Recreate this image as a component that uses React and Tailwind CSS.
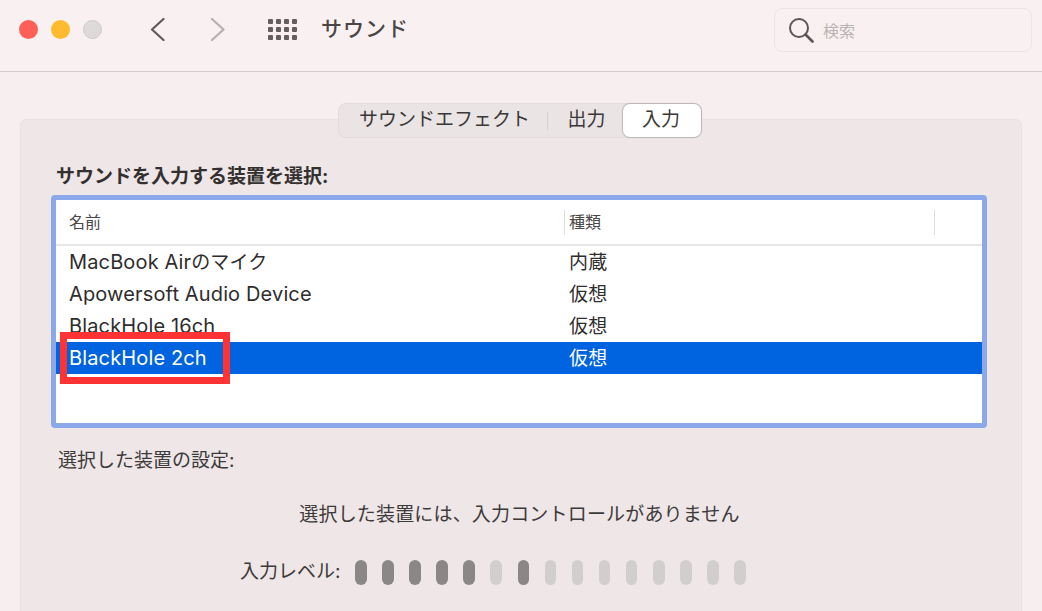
const FONT = 'Inter, "Noto Sans CJK JP", sans-serif';
const rows = [
  ["MacBook Air", "のマイク", "内蔵"],
  ["Apowersoft Audio Device", "", "仮想"],
  ["BlackHole 16ch", "", "仮想"],
  ["BlackHole 2ch", "", "仮想"],
];
const level = [1, 1, 1, 1, 1, 0, 1, 0, 0, 0, 0, 0, 0, 0, 0];

export default function App() {
  return (
    <div className="h-[611px] w-[1042px] overflow-hidden bg-[#f6eeef] text-[#33302f]" style={{ fontFamily: FONT }}>
      <header className="flex h-[72px] items-start border-b border-[#d4cdcd] bg-[#f9f1f1]">
        <div className="ml-[19px] mt-[20px] flex gap-[13px]">
          <span className="h-[19px] w-[19px] rounded-full bg-[#ff5f57]" />
          <span className="h-[19px] w-[19px] rounded-full bg-[#febb2e]" />
          <span className="h-[19px] w-[19px] rounded-full border border-[#cfc9c9] bg-[#dedada]" />
        </div>
        <svg className="ml-[47px] mt-[17px]" width="18" height="24" viewBox="0 0 18 24" fill="none" stroke="#5e5a5a" strokeWidth="2.2" strokeLinecap="round" strokeLinejoin="round">
          <path d="M14.5 2 3 12.5 14.5 23" />
        </svg>
        <svg className="ml-[42px] mt-[17px]" width="18" height="24" viewBox="0 0 18 24" fill="none" stroke="#b5b0b0" strokeWidth="2.2" strokeLinecap="round" strokeLinejoin="round">
          <path d="M3 2 14.5 12.5 3 23" />
        </svg>
        <div className="ml-[41px] mt-[19px] grid grid-cols-[repeat(4,5px)] gap-[3px]">
          {Array.from({ length: 12 }).map((_, i) => (
            <span key={i} className="h-[5px] w-[5px] rounded-[1px] bg-[#635f5f]" />
          ))}
        </div>
        <h1 className="ml-[24px] mt-[13px] text-[21px] font-medium leading-[32px] tracking-[1px] text-[#4a4646]">サウンド</h1>
        <div className="ml-auto mr-[10px] mt-[8px] flex h-[44px] w-[258px] items-center rounded-[8px] border border-[#ece5e5] bg-[#f9f1f1] pl-[13px]">
          <svg width="26" height="26" viewBox="0 0 26 26" fill="none" stroke="#5a5656" strokeWidth="2" strokeLinecap="round">
            <circle cx="11" cy="11" r="9" />
            <path d="M17.5 17.5 24.5 24.5" strokeWidth="2.6" />
          </svg>
          <span className="ml-[9px] mt-[2px] text-[16px] text-[#b9b4b4]">検索</span>
        </div>
      </header>

      <main className="mx-[20px] mt-[47px] h-[520px] rounded-[6px] border border-[#e9e2e3] bg-[#eee6e7]">
        <div className="-mt-[17px] flex justify-center pr-[2px]">
          <div className="flex h-[35px] w-[364px] items-center rounded-[8px] border border-[#e2dcdc] bg-[#eae4e4] text-[19px] text-[#3a3737]">
            <span className="w-[209px] pl-[20px]">サウンドエフェクト</span>
            <span className="h-[18px] w-px bg-[#d5cfcf]" />
            <span className="ml-[19px] w-[56px]">出力</span>
            <span className="flex h-[33px] w-[78px] items-center justify-center rounded-[7px] bg-white pr-[2px] shadow-[0_0_1px_1px_rgba(0,0,0,0.18)]">入力</span>
          </div>
        </div>

        <h2 className="ml-[35px] mt-[26px] text-[19px] font-bold leading-[26px] text-[#33302f]">サウンドを入力する装置を選択:</h2>

        <div className="relative ml-[30px] mt-[5px] h-[233px] w-[936px] rounded-[4px] border-[5px] border-[#8aa8ea] bg-white">
          <div className="flex h-[46px] items-center border-b-2 border-[#e8e6e6] text-[16px] text-[#4a4747]">
            <span className="w-[508px] pl-[13px]">名前</span>
            <span className="h-[25px] w-px bg-[#dedcdc]" />
            <span className="w-[369px] pl-[4px]">種類</span>
            <span className="h-[25px] w-px bg-[#dedcdc]" />
          </div>
          {rows.map(([name, ja, kind], i) => (
            <div key={name} className={`flex h-[32px] items-center text-[20px] tracking-[0.14px] ${i === 3 ? "bg-[#0064e1] text-white" : "text-[#2f2d2d]"}`}>
              <span className="w-[513px] pl-[13px]">
                {name}
                {ja && <span className="text-[19px]">{ja}</span>}
              </span>
              <span className="pt-[2px] text-[19px]">{kind}</span>
            </div>
          ))}
          <div className="absolute left-[4px] top-[132px] h-[52px] w-[170px] border-[7px] border-[#ff3333]" />
        </div>

        <p className="ml-[37px] mt-[19px] text-[19px] leading-[28px] text-[#3d3a3a]">選択した装置の設定:</p>
        <p className="mt-[26px] pr-[3px] text-center text-[19px] leading-[28px] tracking-[0.17px] text-[#3d3a3a]">選択した装置には、入力コントロールがありません</p>

        <div className="mt-[29px] flex items-center">
          <span className="ml-[219px] w-[115px] text-[19px] leading-[28px] text-[#3d3a3a]">入力レベル:</span>
          <div className="flex gap-[15.6px]">
            {level.map((on, i) => (
              <span key={i} className={`h-[25px] w-[11.5px] rounded-full ${on ? "bg-[#8c8787]" : "bg-[#d3cece]"}`} />
            ))}
          </div>
        </div>
      </main>
    </div>
  );
}
